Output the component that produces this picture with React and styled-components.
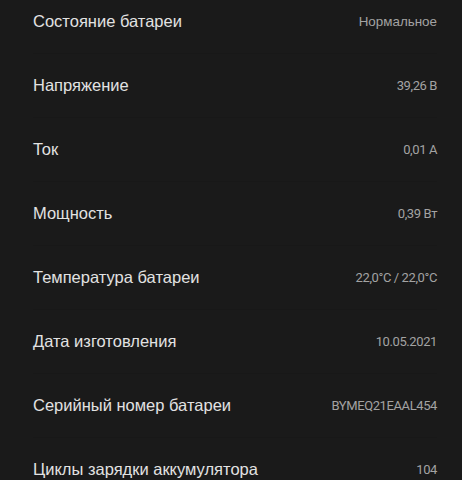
import React from "react";
import styled, { createGlobalStyle } from "styled-components";

const Global = createGlobalStyle`
  html, body { margin: 0; padding: 0; background: #1a1a1a; }
  body { width: 462px; height: 480px; overflow: hidden; }
`;

const Page = styled.div`
  background: #1a1a1a;
  width: 462px;
  height: 480px;
  overflow: hidden;
`;

const List = styled.ul`
  list-style: none;
  margin: -10px 0 0;
  padding: 0 25px 0 33px;
`;

const Row = styled.li`
  display: flex;
  align-items: center;
  justify-content: space-between;
  height: 64px;
  border-bottom: 1px solid #181818;
  box-sizing: border-box;
`;

const Label = styled.span`
  font-family: "Liberation Sans", Arial, sans-serif;
  font-size: 16.5px;
  color: #e2e2e2;
`;

const Value = styled.span`
  font-family: ${(p) => (p.$num ? '"Roboto", "Liberation Sans", sans-serif' : '"Liberation Sans", Arial, sans-serif')};
  font-size: ${(p) => (p.$num ? "13px" : "13.4px")};
  letter-spacing: ${(p) => (p.$num ? "-0.4px" : "0")};
  color: #a3a3a3;
`;

const rows = [
  ["Состояние батареи", "Нормальное", false],
  ["Напряжение", "39,26 В", true],
  ["Ток", "0,01 A", true],
  ["Мощность", "0,39 Вт", true],
  ["Температура батареи", "22,0°C / 22,0°C", true],
  ["Дата изготовления", "10.05.2021", true],
  ["Серийный номер батареи", "BYMEQ21EAAL454", true],
  ["Циклы зарядки аккумулятора", "104", true],
];

export default function App() {
  return (
    <Page>
      <Global />
      <List>
        {rows.map(([l, v, n]) => (
          <Row key={l}>
            <Label>{l}</Label>
            <Value $num={n}>{v}</Value>
          </Row>
        ))}
      </List>
    </Page>
  );
}
